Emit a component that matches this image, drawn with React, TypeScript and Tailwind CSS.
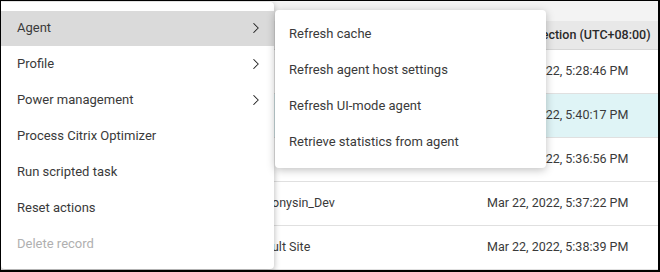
import { ChevronRight } from 'lucide-react';

const mainItems = [
  { label: 'Agent', sub: true, active: true },
  { label: 'Profile', sub: true },
  { label: 'Power management', sub: true },
  { label: 'Process Citrix Optimizer' },
  { label: 'Run scripted task' },
  { label: 'Reset actions' },
  { label: 'Delete record', disabled: true },
];

const agentItems = [
  'Refresh cache',
  'Refresh agent host settings',
  'Refresh UI-mode agent',
  'Retrieve statistics from agent',
];

const rows = [
  { name: '', time: 'Mar 22, 2022, 5:28:46 PM' },
  { name: '', time: 'Mar 22, 2022, 5:40:17 PM', selected: true },
  { name: '', time: 'Mar 22, 2022, 5:36:56 PM' },
  { name: 'Anthonysin_Dev', time: 'Mar 22, 2022, 5:37:22 PM' },
  { name: 'Default Site', time: 'Mar 22, 2022, 5:38:39 PM' },
];

export default function App() {
  return (
    <div
      className="relative w-[660px] h-[272px] overflow-hidden bg-white border-t border-l border-r-2 border-b-2 border-black text-[#3a3a3a] text-[13px]"
      style={{ fontFamily: 'Roboto, "Liberation Sans", sans-serif' }}
    >
      {/* Table behind the menus */}
      <div className="h-[20px] bg-[#f3f3f3]" />
      <div className="flex h-[29px] items-center bg-[#e8e8e8] border-b border-[#d6d6d6] text-[12.5px] font-medium text-[#2a2a2a]">
        <div className="w-[486px]" />
        <div className="whitespace-nowrap">Last connection (UTC+08:00)</div>
      </div>
      {rows.map((r) => (
        <div
          key={r.time}
          className={`flex h-[44px] items-center border-b border-[#e0e0e0] text-[12.5px] ${r.selected ? 'bg-[#dff4f6]' : 'bg-white'}`}
        >
          <div className="w-[245px]" />
          <div className="w-[241px] whitespace-nowrap">{r.name}</div>
          <div className="whitespace-nowrap">{r.time}</div>
        </div>
      ))}

      {/* Main context menu */}
      <div className="absolute left-0 top-[1px] w-[273px] h-[267px] bg-white rounded-b-[4px] rounded-tr-[4px] shadow-[0_2px_6px_rgba(0,0,0,0.3)] pt-[9px]">
        {mainItems.map((it) => (
          <div
            key={it.label}
            className={`flex h-[35px] mb-px items-center justify-between pl-4 pr-[9px] ${it.active ? 'bg-[#dadada]' : ''} ${it.disabled ? 'text-[#b0b0b0]' : ''}`}
          >
            <span className="-mt-[2px]">{it.label}</span>
            {it.sub && <ChevronRight size={18} strokeWidth={1.4} className="text-[#222] -mt-[2px]" />}
          </div>
        ))}
      </div>

      {/* Agent submenu */}
      <div className="absolute left-[274px] top-[9px] w-[271px] h-[158px] bg-white rounded-[4px] shadow-[0_2px_8px_rgba(0,0,0,0.25)] pt-[6px]">
        {agentItems.map((s) => (
          <div key={s} className="flex h-[36px] items-center pl-[14px]">
            {s}
          </div>
        ))}
      </div>
    </div>
  );
}
